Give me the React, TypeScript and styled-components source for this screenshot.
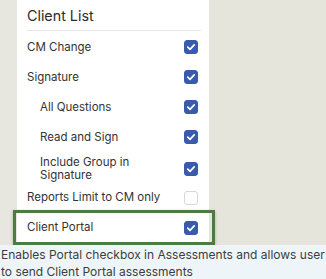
import styled, { createGlobalStyle } from 'styled-components';

const GlobalStyle = createGlobalStyle`
  html, body {
    margin: 0;
    padding: 0;
    background: #e7e6dd;
  }
  * { box-sizing: border-box; }
`;

const Page = styled.div`
  width: 326px;
  height: 279px;
  overflow: hidden;
  display: flex;
  flex-direction: column;
  font-family: Inter, "Liberation Sans", sans-serif;
`;

const Top = styled.div`
  display: flex;
  background: linear-gradient(90deg, #e8e7df 0, #e8e7df 17px, #e6e5dc 17px);
`;

const Panel = styled.div`
  width: 192px;
  margin-left: 17px;
  background: #fff;
  padding: 6px 10px 0 10px;
`;

const Title = styled.div`
  font-size: 14.3px;
  color: #2b2b2b;
  line-height: 20px;
  padding-bottom: 4px;
  border-bottom: 1px solid #e6e6e6;
  margin-right: -2px;
`;

const List = styled.div`
  display: flex;
  flex-direction: column;
  padding-top: 1px;
`;

const Row = styled.div<{ $indent?: boolean; $h?: number }>`
  display: flex;
  align-items: center;
  justify-content: space-between;
  min-height: ${p => p.$h ?? 30}px;
  padding-left: ${p => (p.$indent ? 13 : 0)}px;
  padding-right: 1px;
  font-size: 11.5px;
  color: #333;
`;

const Highlight = styled(Row)`
  margin: 0 -16px 0 -14px;
  padding: 0 14px 0 11px;
  border: 3px solid #4f7a43;
  box-shadow: 0 1px 3px rgba(0, 0, 0, 0.25);
`;

const Label = styled.span`
  line-height: 13px;
  max-width: 140px;
`;

const Box = styled.span<{ $on: boolean }>`
  width: 14px;
  height: 14px;
  border-radius: 3px;
  flex: none;
  display: inline-flex;
  align-items: center;
  justify-content: center;
  background: ${p => (p.$on ? '#3a5aab' : '#fff')};
  border: 1px solid ${p => (p.$on ? '#3a5aab' : '#d8d8d8')};
`;

const Note = styled.div`
  flex: 1;
  background: #eef5f9;
  padding: 1px 0 0 1px;
  font-size: 12px;
  line-height: 17px;
  color: #3d3d3d;
  white-space: nowrap;
`;

function Check({ on }: { on: boolean }) {
  return (
    <Box $on={on}>
      {on && (
        <svg width="10" height="10" viewBox="0 0 10 10">
          <path d="M1.8 5.2 L4 7.3 L8.2 2.8" fill="none" stroke="#fff" strokeWidth="1.7" strokeLinecap="round" strokeLinejoin="round" />
        </svg>
      )}
    </Box>
  );
}

const items = [
  { label: 'CM Change', on: true },
  { label: 'Signature', on: true },
  { label: 'All Questions', on: true, indent: true },
  { label: 'Read and Sign', on: true, indent: true },
  { label: 'Include Group in Signature', on: true, indent: true, h: 33 },
  { label: 'Reports Limit to CM only', on: false, h: 25 },
];

export default function App() {
  return (
    <>
      <GlobalStyle />
      <Page>
        <Top>
          <Panel>
            <Title>Client List</Title>
            <List>
              {items.map(it => (
                <Row key={it.label} $indent={it.indent} $h={it.h}>
                  <Label>{it.label}</Label>
                  <Check on={it.on} />
                </Row>
              ))}
              <Highlight $h={35}>
                <Label>Client Portal</Label>
                <Check on />
              </Highlight>
            </List>
          </Panel>
        </Top>
        <Note>
          Enables Portal checkbox in Assessments and allows user
          <br />
          to send Client Portal assessments
        </Note>
      </Page>
    </>
  );
}
